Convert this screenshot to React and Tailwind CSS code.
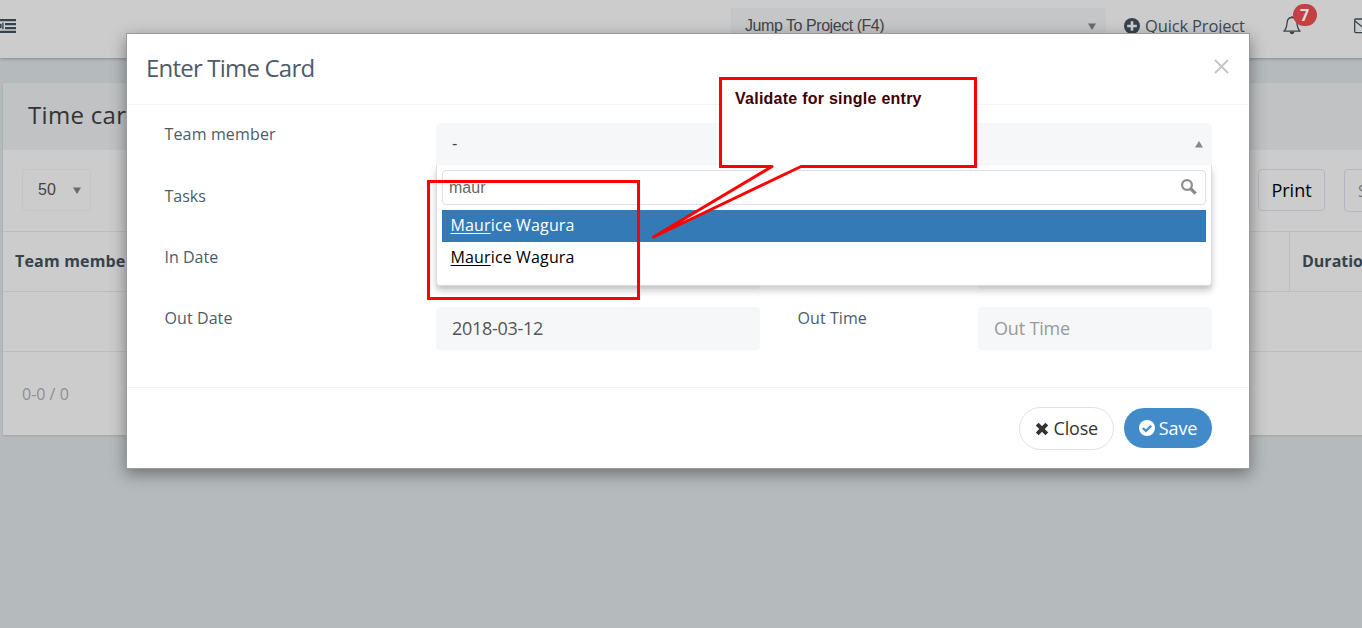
import React from "react";

const sans = "font-['Open_Sans',sans-serif]";
const arial = "font-['Liberation_Sans',sans-serif]";

function Triangle({ up }) {
  return (
    <svg width="8" height="7" viewBox="0 0 8 7" className="shrink-0">
      <path d={up ? "M4 0 L8 6.5 H0 Z" : "M0 0.5 H8 L4 7 Z"} fill={up ? "#888" : "#6b6b6b"} />
    </svg>
  );
}

function OutdentIcon() {
  return (
    <svg width="16" height="14" viewBox="0 0 16 14" className="shrink-0" fill="#36434d">
      <path d="M0 0H16V2.2H0ZM5 4H16V6.2H5ZM5 8H16V10.2H5ZM0 11.8H16V14H0ZM0 5L1 4.5L1.6 5V9L1 9.5L0 9ZM2.2 3.6H3.6V10.2H2.2Z" />
    </svg>
  );
}

function PlusCircle() {
  return (
    <svg width="16" height="16" viewBox="0 0 16 16" className="shrink-0">
      <circle cx="8" cy="8" r="8" fill="#36434d" />
      <path d="M8 3.2V12.8M3.2 8H12.8" stroke="#ccc" strokeWidth="2.6" />
    </svg>
  );
}

function BellIcon() {
  return (
    <svg width="18" height="20" viewBox="0 0 18 20" fill="none" stroke="#36434d" strokeWidth="1.3" strokeLinejoin="round">
      <path d="M9 1V2.5M9 2.5C5.8 2.5 4.3 4.8 4.1 7.5C3.9 11.5 3.3 14 0.9 16.2H17.1C14.7 14 14.1 11.5 13.9 7.5C13.7 4.8 12.2 2.5 9 2.5Z" />
      <path d="M6.6 16.8A2.4 2.4 0 0 0 11.4 16.8Z" fill="#36434d" stroke="none" />
    </svg>
  );
}

function EnvelopeIcon() {
  return (
    <svg width="19" height="16" viewBox="0 0 19 16" className="shrink-0" fill="none" stroke="#36434d" strokeWidth="1.3">
      <rect x="0.7" y="1" width="17.6" height="13.6" rx="1" />
      <path d="M1 3L9.5 10L18 3" />
    </svg>
  );
}

function TopBar() {
  return (
    <header className="flex h-[58px] w-[1400px] items-start bg-[#ccc] shadow-[0_1px_3px_rgba(0,0,0,0.25)]">
      <div className="mt-[19px]"><OutdentIcon /></div>
      <div className={`ml-[715px] mt-2 flex h-9 w-[375px] items-center justify-between bg-[#c5c6c7] pl-[14px] pr-[10px] text-[16px] text-[#444] ${arial}`}>
        <span className="tracking-[-0.45px]">Jump To Project (F4)</span>
        <Triangle />
      </div>
      <div className="ml-[18px] mt-[17px] flex h-[18px] w-[122px] items-center gap-[5px] whitespace-nowrap text-[16.5px] tracking-[-0.15px] text-[#3d4a54]">
        <PlusCircle />
        <span>Quick Project</span>
      </div>
      <div className="relative ml-[37px] mt-[15px] w-[18px]">
        <BellIcon />
        <span className="absolute -top-[11px] left-[10px] flex h-[22px] w-6 items-center justify-center rounded-full bg-[#c34143] pr-px text-[16px] font-bold text-[#ddd]">7</span>
      </div>
      <div className="ml-[53px] mt-[18px]"><EnvelopeIcon /></div>
    </header>
  );
}

function TimeCardsPanel() {
  return (
    <section className="ml-[3px] mt-[25px] h-[352px] w-[1400px] bg-[#ccc] shadow-[0_1px_2px_rgba(0,0,0,0.12)]">
      <div className="flex h-[67px] items-center bg-[#c1c2c4] pl-[25px] text-[24px] text-[#333]">
        <span className="-mt-1 tracking-[0.3px]">Time cards</span>
      </div>
      <div className="flex h-[82px] items-start border-b border-[#bbbdbf] pl-[19px] pt-[19px]">
        <div className={`flex h-[42px] w-[69px] items-center justify-between rounded-sm border border-[#c4c5c7] pl-[15px] pr-[9px] text-[16px] text-[#444] ${arial}`}>
          <span>50</span>
          <Triangle />
        </div>
        <div className="ml-[1167px] flex h-[42px] w-[67px] shrink-0 items-center justify-center rounded-sm border border-[#b4b7c0] text-[18px] text-black">Print</div>
        <div className="ml-[19px] flex h-[43px] w-[56px] shrink-0 items-center rounded-sm border border-[#b4b7c0] pl-[13px] text-[16px] text-[#777]">S</div>
      </div>
      <div className="flex h-[60px] items-center border-b border-[#bbbdbf] text-[16px] font-bold text-[#36434d]">
        <div className="-mt-[2px] w-[1286px] pl-3 tracking-[0.18px]">Team member</div>
        <div className="flex h-full items-center border-l border-[#bbbdbf] pb-[2px] pl-3">Duration</div>
      </div>
      <div className="h-[60px] border-b border-[#bbbdbf]" />
      <div className="flex h-[83px] items-center pl-[19px] text-[16px] text-[#8d8f92]">0-0 / 0</div>
    </section>
  );
}

function Label({ children, className = "" }) {
  return <div className={`h-[22px] text-[16px] leading-[22px] text-[#4d5b69] ${className}`}>{children}</div>;
}

function Field({ children, className = "" }) {
  return (
    <div className={`flex h-[43px] items-center rounded-sm bg-[#f6f7f9] pl-4 text-[18px] ${className}`}>{children}</div>
  );
}

function MemberDropdown() {
  return (
    <div className="absolute left-0 top-[42px] h-[121px] w-[776px] rounded-b-sm border border-t-0 border-[#dcdcdf] bg-white px-[5px] pt-[5px] shadow-[0_5px_7px_rgba(0,0,0,0.2)]">
      <div className={`flex h-[35px] items-center justify-between rounded-sm border border-[#dfe0ec] pl-[7px] pr-2 text-[16px] text-[#666] ${arial}`}>
        <span className="-ml-px">maur</span>
        <svg width="16" height="16" viewBox="0 0 16 16" fill="none" stroke="#8c8c8c" className="-mt-[2px]">
          <circle cx="6" cy="6" r="4.9" strokeWidth="2.2" />
          <path d="M9.5 9.5L14.6 14.6" strokeWidth="3.2" />
        </svg>
      </div>
      <div className="mt-[5px] h-8 bg-[#337ab7] pl-[8.5px] text-[16px] leading-[31px] tracking-[0.14px] text-white">
        <span className="underline underline-offset-2">Maur</span>ice Wagura
      </div>
      <div className="h-8 pl-[8.5px] text-[16px] leading-[31px] tracking-[0.14px] text-black">
        <span className="underline underline-offset-2">Maur</span>ice Wagura
      </div>
    </div>
  );
}

function TimeCardModal() {
  return (
    <div className="absolute left-[126px] top-[33px] h-[436px] w-[1124px] border border-[#999b9d] bg-white shadow-[0_5px_15px_rgba(0,0,0,0.4)]">
      <div className="flex h-[71px] items-center justify-between border-b border-[#f3f4f5] pl-[19px] pr-5 text-[24px] text-[#4d5b69]">
        <h4 className="-mt-[2px] tracking-[-0.8px]">Enter Time Card</h4>
        <svg width="15" height="15" viewBox="0 0 15 15" stroke="#c4c4c4" strokeWidth="1.8" className="-mt-[5px]">
          <path d="M1 1L14 14M14 1L1 14" />
        </svg>
      </div>
      <div className="h-[283px] border-b border-[#f1f2f3] pl-[37.5px] pt-[18px]">
        <div className="flex h-[61px]">
          <Label className="w-[271.5px] tracking-[0.15px]">Team member</Label>
          <div className="relative">
            <div className={`flex h-[42px] w-[776px] items-center justify-between rounded-sm bg-[#f6f7f9] pl-4 pr-[9px] text-[16px] text-[#444] ${arial}`}>
              <span>-</span>
              <Triangle up />
            </div>
            <MemberDropdown />
          </div>
        </div>
        <div className="flex h-[62px]"><Label className="mt-px">Tasks</Label></div>
        <div className="flex h-[61px]">
          <Label className="w-[271.5px]">In Date</Label>
          <Field className="w-[324px]" />
          <Field className="ml-[218px] w-[234px]" />
        </div>
        <div className="flex">
          <Label className="w-[271.5px] tracking-[0.08px]">Out Date</Label>
          <Field className="w-[324px] tracking-[-0.28px] text-[#555]">2018-03-12</Field>
          <Label className="ml-[37.5px] w-[180.5px] tracking-[0.08px]">Out Time</Label>
          <Field className="w-[234px] tracking-[-0.18px] text-[#999]">Out Time</Field>
        </div>
      </div>
      <div className="flex justify-end gap-[10px] pr-[37px] pt-[19px] text-[18px]">
        <div className="flex h-[43px] w-[95px] items-center justify-center gap-[4.5px] rounded-full border border-[#e2e2e2] text-[#333]">
          <svg width="14" height="14" viewBox="0 0 14 14" stroke="#333" strokeWidth="4">
            <path d="M2.2 2.2L11.8 11.8M11.8 2.2L2.2 11.8" />
          </svg>
          <span className="tracking-[-0.2px]">Close</span>
        </div>
        <div className="mt-px flex h-10 w-[88px] items-center justify-center gap-1 rounded-full bg-[#428bca] text-white">
          <svg width="16" height="16" viewBox="0 0 16 16" fill="none">
            <circle cx="8" cy="8" r="8" fill="#fff" />
            <path d="M3.8 8L6.9 11L12.2 5.7" stroke="#428bca" strokeWidth="2.3" />
          </svg>
          <span className="tracking-[-0.1px]">Save</span>
        </div>
      </div>
    </div>
  );
}

function Annotations() {
  return (
    <>
      <div className="absolute left-[427px] top-[180px] h-[120px] w-[213px] border-[3px] border-[#fe0000]" />
      <svg width="328" height="164" viewBox="0 0 328 164" className="absolute left-[650px] top-[76px]">
        <path d="M122 90.5H70.5V2.5H325.5V90.5H151L3.5 161Z" fill="#fff" stroke="#fe0000" strokeWidth="3" strokeLinejoin="round" />
        <path d="M70.5 90.5V2.5H325.5V90.5" fill="none" stroke="#fe0000" strokeWidth="3" strokeLinecap="square" />
      </svg>
      <div className={`absolute left-[735px] top-[89px] whitespace-nowrap text-[16px] leading-5 font-bold tracking-[0.25px] text-[#400000] ${arial}`}>Validate for single entry</div>
    </>
  );
}

export default function App() {
  return (
    <main className={`relative h-[628px] w-full overflow-hidden bg-[#b5babd] ${sans}`}>
      <TopBar />
      <TimeCardsPanel />
      <TimeCardModal />
      <Annotations />
    </main>
  );
}
